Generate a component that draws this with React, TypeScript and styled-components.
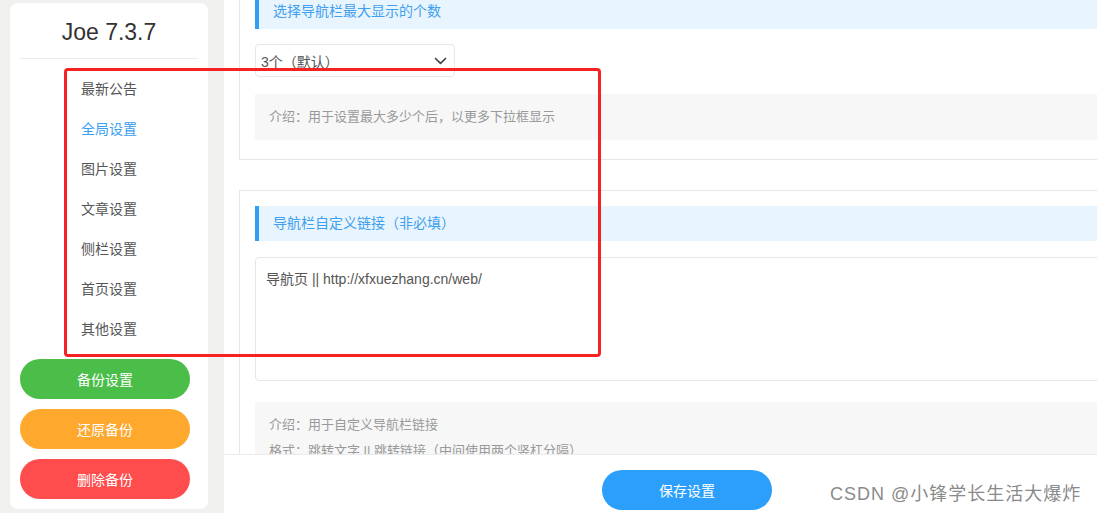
import styled, { createGlobalStyle } from 'styled-components'

const GlobalStyle = createGlobalStyle`
  html, body {
    margin: 0;
    padding: 0;
    overflow: hidden;
    background: #f0f0ee;
  }
  * {
    box-sizing: border-box;
  }
`

const FONT = `"Liberation Sans", "Noto Sans CJK SC", sans-serif`

// Layout
const Page = styled.div`
  position: relative;
  display: flex;
  width: 1150px;
  height: 513px;
  background: #f0f0ee;
  font-family: ${FONT};
`

// Sidebar
const Sidebar = styled.aside`
  width: 198px;
  margin: 3px 0 4px 10px;
  padding: 0 10px 9px;
  background: #fff;
  border-radius: 8px;
  display: flex;
  flex-direction: column;
`
const Title = styled.div`
  height: 56px;
  line-height: 58px;
  text-align: center;
  font-size: 23px;
  color: #333;
  border-bottom: 1px solid #ececec;
`
const Menu = styled.ul`
  list-style: none;
  margin: 0;
  padding: 10px 0 0;
`
const MenuItem = styled.li<{ $active?: boolean }>`
  height: 40px;
  line-height: 40px;
  text-align: center;
  font-size: 14px;
  color: ${(p) => (p.$active ? '#3aa0f0' : '#555')};
`
const ActionStack = styled.div`
  display: flex;
  flex-direction: column;
  gap: 10px;
  margin: 10px 8px 0 0;
`
const PillButton = styled.button<{ $color: string }>`
  height: 40px;
  border: none;
  border-radius: 20px;
  background: ${(p) => p.$color};
  color: #fff;
  font-family: ${FONT};
  font-size: 14px;
  cursor: pointer;
`

// Main panel
const Main = styled.main`
  flex: 1;
  margin-left: 16px;
  background: #fff;
  display: flex;
  flex-direction: column;
  min-width: 0;
`
const ScrollArea = styled.div`
  flex: 1;
  overflow: hidden;
  padding: 0 15px;
`
const ScrollBody = styled.div`
  margin-top: -22px;
  display: flex;
  flex-direction: column;
  gap: 30px;
`
const Card = styled.section<{ $padBottom?: number }>`
  border: 1px solid #e6e6e6;
  padding: 15px 15px ${(p) => p.$padBottom ?? 15}px;
  display: flex;
  flex-direction: column;
`
const SectionBar = styled.div`
  height: 35px;
  line-height: 35px;
  padding-left: 14px;
  background: #e9f5fe;
  border-left: 4px solid #2f9ff3;
  color: #3ea0ee;
  font-size: 14px;
`
const SelectBox = styled.div`
  margin-top: 15px;
  width: 200px;
  height: 33px;
  padding: 0 7px 0 5px;
  border: 1px solid #e8e8e8;
  border-radius: 4px;
  display: flex;
  align-items: center;
  justify-content: space-between;
  font-size: 14px;
  color: #555;
`
const TextArea = styled.div`
  margin-top: 16px;
  height: 124px;
  padding: 10px;
  border: 1px solid #e6e6e6;
  border-radius: 4px;
  font-size: 14px;
  line-height: 22px;
  color: #555;
`
const Intro = styled.div<{ $gap: number }>`
  margin-top: ${(p) => p.$gap}px;
  padding: 10px 14px;
  background: #f7f7f7;
  font-size: 13px;
  line-height: 26px;
  color: #999;
`

// Bottom bar
const Footer = styled.footer`
  height: 59px;
  border-top: 1px solid #ececec;
  background: #fff;
  display: flex;
  justify-content: center;
  padding-top: 15px;
`
const SaveButton = styled.button`
  width: 170px;
  height: 40px;
  border: none;
  border-radius: 20px;
  background: #2b9ffb;
  color: #fff;
  font-family: ${FONT};
  font-size: 14px;
`

// Overlays
const Annotation = styled.div`
  position: absolute;
  left: 64px;
  top: 68px;
  width: 537px;
  height: 289px;
  border: 3px solid #f52222;
  border-radius: 4px;
  pointer-events: none;
`
const Watermark = styled.div`
  position: absolute;
  left: 830px;
  top: 482px;
  font-size: 18px;
  line-height: 24px;
  letter-spacing: 1px;
  color: #8a8a8a;
  white-space: nowrap;
  text-shadow: 0 0 2px #fff;
`

const Chevron = () => (
  <svg width="13" height="8" viewBox="0 0 13 8" fill="none">
    <path d="M1.5 1.5 L6.5 6.3 L11.5 1.5" stroke="#444" strokeWidth="1.7" strokeLinecap="round" strokeLinejoin="round" />
  </svg>
)

const menu = ['最新公告', '全局设置', '图片设置', '文章设置', '侧栏设置', '首页设置', '其他设置']

export default function App() {
  return (
    <>
      <GlobalStyle />
      <Page>
        <Sidebar>
          <Title>Joe 7.3.7</Title>
          <Menu>
            {menu.map((m) => (
              <MenuItem key={m} $active={m === '全局设置'}>
                {m}
              </MenuItem>
            ))}
          </Menu>
          <ActionStack>
            <PillButton $color="#4abe49">备份设置</PillButton>
            <PillButton $color="#ffa82e">还原备份</PillButton>
            <PillButton $color="#ff4c4c">删除备份</PillButton>
          </ActionStack>
        </Sidebar>
        <Main>
          <ScrollArea>
            <ScrollBody>
              <Card $padBottom={19}>
                <SectionBar>选择导航栏最大显示的个数</SectionBar>
                <SelectBox>
                  <span>3个（默认）</span>
                  <Chevron />
                </SelectBox>
                <Intro $gap={17}>介绍：用于设置最大多少个后，以更多下拉框显示</Intro>
              </Card>
              <Card>
                <SectionBar>导航栏自定义链接（非必填）</SectionBar>
                <TextArea>导航页 || http://xfxuezhang.cn/web/</TextArea>
                <Intro $gap={21}>
                  <div>介绍：用于自定义导航栏链接</div>
                  <div>格式：跳转文字 || 跳转链接（中间使用两个竖杠分隔）</div>
                </Intro>
              </Card>
            </ScrollBody>
          </ScrollArea>
          <Footer>
            <SaveButton>保存设置</SaveButton>
          </Footer>
        </Main>
        <Annotation />
        <Watermark>CSDN @小锋学长生活大爆炸</Watermark>
      </Page>
    </>
  )
}
